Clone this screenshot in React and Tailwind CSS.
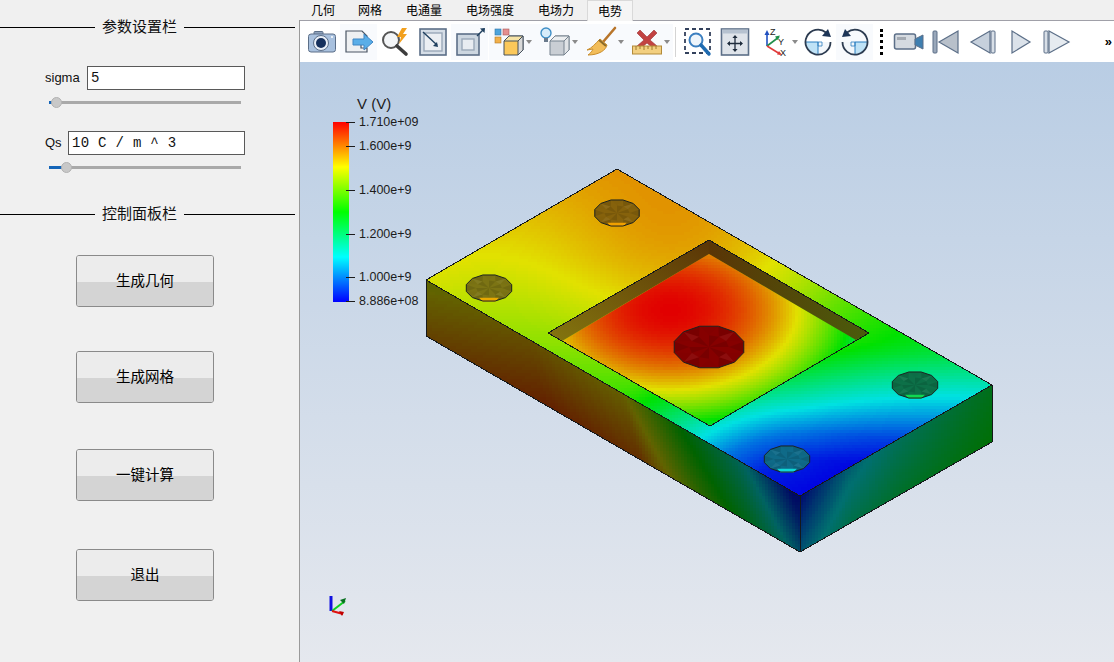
import React from "react";

const sans = "font-['Liberation_Sans','Noto_Sans_CJK_SC',sans-serif]";
const cjk = "font-['Noto_Sans_CJK_SC','Liberation_Sans',sans-serif]";

// ---------- potential field drawn on the part ----------
const clamp = (v, a = 0, b = 1) => Math.min(b, Math.max(a, v));

function rainbow(t) {
  const v = clamp(t) * 4;
  if (v < 1) return [0, v, 1];
  if (v < 2) return [0, 1, 2 - v];
  if (v < 3) return [v - 2, 1, 0];
  return [1, 4 - v, 0];
}

function lerpStops(stops, u) {
  for (let i = 1; i < stops.length; i++) {
    if (u <= stops[i][0]) {
      const [a, b] = [stops[i - 1], stops[i]];
      return a[1] + ((b[1] - a[1]) * (u - a[0])) / (b[0] - a[0]);
    }
  }
  return stops[stops.length - 1][1];
}

const topStops = [[0, 0], [30, 0.02], [57, 0.1], [90, 0.25], [140, 0.47], [150, 0.5], [400, 0.85]];

function topField(x, y) {
  const dx = (x - 800) / (x > 800 ? 3.5 : 1.6);
  const d = Math.hypot(dx, y - 490);
  const bump = 0.19 * Math.exp(-(((x - 690) / 110) ** 2) / 2 - ((y - 280) / 90) ** 2 / 2);
  return lerpStops(topStops, d) + bump - (x > 800 ? 0.0004 * (x - 800) : 0);
}

function floorField(x, y) {
  return 1 - ((x - 670) / 255) ** 2 - ((y - 310) / 160) ** 2;
}

const leftStops = [[0, 0.72], [0.3, 0.8], [0.55, 0.76], [0.7, 0.5], [0.85, 0.3], [1, 0.02]];
const rightStops = [[0, 0.02], [0.25, 0.2], [0.5, 0.3], [1, 0.44]];

function raster(x0, y0, x1, y1, shade, fn) {
  const buckets = new Map();
  const step = 3;
  for (let y = y0; y < y1; y += step) {
    for (let x = x0; x < x1; x += step) {
      const t = fn(x + 1.5, y + 1.5);
      if (t === null) continue;
      const [r, g, b] = rainbow(t).map((c) => Math.round((c * shade) / 3) * 3);
      const key = `rgb(${r},${g},${b})`;
      buckets.set(key, (buckets.get(key) || "") + `M${x} ${y}h3v3h-3z`);
    }
  }
  return [...buckets.entries()];
}

const topCells = raster(423, 166, 995, 499, 226, topField);
const floorCells = raster(558, 250, 860, 430, 226, floorField);
const leftCells = raster(423, 277, 803, 555, 98, (x, y) => {
  const u = (x - 426) / 374;
  const v = (y - (280 + u * 216)) / 56;
  if (v < -0.1 || v > 1.1) return null;
  return lerpStops(leftStops, clamp(u + (v - 0.5) * -0.05)) + 0.12 * v;
});
const rightCells = raster(797, 382, 995, 555, 112, (x, y) => {
  const u = (x - 800) / 192;
  const v = (y - (496 - u * 111)) / 56;
  if (v < -0.1 || v > 1.1) return null;
  return lerpStops(rightStops, clamp(u)) + 0.16 * clamp(v) * (1 - clamp(u) * 0.7);
});

function Cells({ cells, clip }) {
  return (
    <g clipPath={`url(#${clip})`} shapeRendering="crispEdges">
      {cells.map(([fill, d]) => (
        <path key={fill} d={d} fill={fill} />
      ))}
    </g>
  );
}

function Hole({ cx, cy, rx, ry, fill, rim, n = 12 }) {
  const ring = (k, off = 0) =>
    Array.from({ length: n }, (_, i) => {
      const a = ((i + off) / n) * Math.PI * 2;
      return [cx + Math.cos(a) * rx * k, cy + Math.sin(a) * ry * k];
    });
  const outer = ring(1, 0.5);
  const inner = ring(0.55, 1);
  const pts = (arr) => arr.map((p) => p.join(",")).join(" ");
  return (
    <g>
      <polygon points={pts(outer)} fill={fill} />
      {outer.map((p, i) => {
        const q = outer[(i + 1) % n];
        const m = inner[i];
        const m2 = inner[(i + 1) % n];
        return (
          <g key={i}>
            <polygon points={pts([p, q, m])} fill="#000" opacity={i % 2 ? 0.1 : 0.02} />
            {i % 2 === 0 && <polygon points={pts([m, m2, [cx, cy]])} fill="#000" opacity={0.1} />}
            {i % 3 === 0 && <polygon points={pts([m, m2, q])} fill="#fff" opacity={0.05} />}
          </g>
        );
      })}
      {rim && (
        <polygon
          points={`${cx - rx * 0.42},${cy + ry * 0.72} ${cx + rx * 0.42},${cy + ry * 0.72} ${cx + rx * 0.28},${cy + ry} ${cx - rx * 0.28},${cy + ry}`}
          fill={rim}
        />
      )}
      <polygon points={pts(outer)} fill="none" stroke="#1c2320" strokeWidth="1" />
    </g>
  );
}

function Model() {
  return (
    <svg width="814" height="600" viewBox="300 62 814 600" className="absolute left-0 top-0">
      <defs>
        <clipPath id="top-face"><polygon points="426,280 617,169 992,385 800,496" /></clipPath>
        <clipPath id="floor-face"><polygon points="562,341 709,254 856,340 710,426" /></clipPath>
        <clipPath id="left-face"><polygon points="426,280 800,496 800,552 426,336" /></clipPath>
        <clipPath id="right-face"><polygon points="800,496 992,385 992,442 800,552" /></clipPath>
        <linearGradient id="wall-a" x1="0" y1="1" x2="1" y2="0">
          <stop offset="0" stopColor="#84760f" />
          <stop offset="1" stopColor="#5a3506" />
        </linearGradient>
        <linearGradient id="wall-b" x1="0" y1="0" x2="1" y2="0">
          <stop offset="0" stopColor="#5a3506" />
          <stop offset="1" stopColor="#4a5c0c" />
        </linearGradient>
      </defs>
      <Cells cells={leftCells} clip="left-face" />
      <Cells cells={rightCells} clip="right-face" />
      <Cells cells={topCells} clip="top-face" />
      <Cells cells={floorCells} clip="floor-face" />
      <polygon points="548,333 709,240 709,254 562,341" fill="url(#wall-a)" />
      <polygon points="709,240 869,333 856,340 709,254" fill="url(#wall-b)" />
      <g fill="none" stroke="#15181a" strokeWidth="1" shapeRendering="crispEdges">
        <polygon points="426,280 617,169 992,385 992,442 800,552 426,336" />
        <polyline points="426,280 800,496 992,385" />
        <line x1="800" y1="496" x2="800" y2="552" />
        <polyline points="710,426 548,333 709,240 869,333 710,426" />
      </g>
      <Hole cx={617} cy={213} rx={23} ry={13.500} fill="#86620c" rim="#f0a000" />
      <Hole cx={489} cy={288} rx={23.500} ry={13.500} fill="#7c7414" rim="#e8a800" />
      <Hole cx={915} cy={385} rx={23.500} ry={13.500} fill="#0d7048" rim="#10d850" />
      <Hole cx={787} cy={459} rx={23.500} ry={13.500} fill="#0f6a88" rim="#10d8d8" />
      <Hole cx={709} cy={347} rx={36} ry={21.500} fill="#860000" />
      <g strokeWidth="2" fill="none">
        <line x1="331" y1="611" x2="331" y2="596" stroke="#1010e0" strokeWidth="3" />
        <line x1="332" y1="611" x2="345" y2="601" stroke="#10d020" />
        <line x1="332" y1="611" x2="343" y2="614" stroke="#e01010" />
      </g>
      <polygon points="340,600 346,598 344,604" fill="#087020" />
      <polygon points="339,611 344,612 342,616" fill="#c00000" />
    </svg>
  );
}

// ---------- colour legend ----------
const ticks = [
  ["1.710e+09", 122],
  ["1.600e+9", 146],
  ["1.400e+9", 190],
  ["1.200e+9", 234],
  ["1.000e+9", 277],
  ["8.886e+08", 301],
];

function Legend() {
  return (
    <div className={`absolute left-[33px] top-[33px] w-[110px] h-[220px] text-[#1c1c1c] ${sans}`}>
      <div className="absolute left-[24px] top-0 text-[15px] leading-[18px]">V (V)</div>
      <div className="absolute left-0 top-[27px] w-[16px] h-[180px] bg-[linear-gradient(to_bottom,#ff0000,#ffff00_25%,#00ff00_50%,#00ffff_75%,#0000ff)]" />
      {ticks.map(([label, y]) => (
        <div key={label} className="absolute left-[13px] flex items-center h-[14px]" style={{ top: y - 95 - 7 }}>
          <span className="w-[9px] h-[1px] bg-[#1c1c1c]" />
          <span className="ml-[4px] text-[12.5px] leading-[14px] whitespace-nowrap">{label}</span>
        </div>
      ))}
    </div>
  );
}

// ---------- toolbar icons ----------
const Icon = ({ children }) => (
  <svg width="32" height="32" viewBox="0 0 32 32" className="shrink-0">{children}</svg>
);

const line = "#5c6f88";

const CameraIcon = () => (
  <Icon>
    <rect x="8" y="5.5" width="9" height="4" rx="1" fill="#8fa3bd" stroke={line} />
    <rect x="2.5" y="8" width="27" height="18" rx="2.5" fill="#a9c1de" stroke={line} />
    <circle cx="15" cy="17" r="7.5" fill="#e8eef6" stroke={line} />
    <circle cx="15" cy="17" r="5" fill="#15305c" />
    <circle cx="26" cy="11" r="1" fill="#fff" />
  </Icon>
);
const ExportIcon = () => (
  <Icon>
    <path d="M3 5h16l5 5v7h-6v5h6v4H3z" fill="#eef0f2" stroke="#4a5564" strokeWidth="1.2" />
    <path d="M10 13h11V8l9 8-9 8v-5H10z" fill="#5aaee8" stroke="#3f86c4" />
  </Icon>
);
const SpotIcon = () => (
  <Icon>
    <circle cx="11" cy="14" r="8" fill="#f3f5f7" stroke="#555" strokeWidth="2" />
    <path d="M17 20l9 8" stroke="#3c3c3c" strokeWidth="3.6" strokeLinecap="round" />
    <path d="M22 2l-5 9h4l-2 7 8-10h-4l4-6z" fill="#f2a01e" />
  </Icon>
);
const BoxInIcon = () => (
  <Icon>
    <rect x="3" y="3" width="26" height="26" fill="#d6dee7" stroke={line} strokeWidth="1.6" />
    <rect x="7" y="7" width="18" height="18" fill="#eceff3" stroke="#9aa8b8" strokeWidth="1.4" />
    <path d="M6 6l14 13" stroke="#20405f" strokeWidth="1.4" />
    <path d="M16 20l5 1-1-5z" fill="#20405f" />
  </Icon>
);
const BoxOutIcon = () => (
  <Icon>
    <rect x="3" y="8" width="22" height="21" fill="#ccd6e0" stroke={line} strokeWidth="1.6" />
    <rect x="8" y="13" width="12" height="11" fill="#e8ecf1" stroke="#9aa8b8" strokeWidth="1.4" />
    <path d="M23 10l7-7" stroke="#20405f" strokeWidth="1.4" />
    <path d="M26 2.5l5-.5-.5 5z" fill="#20405f" />
  </Icon>
);
const PaletteIcon = () => (
  <Icon>
    <rect x="2" y="3" width="6" height="6" fill="#4ea4dc" stroke="#2f75a8" strokeWidth=".6" />
    <rect x="10" y="3" width="6" height="6" fill="#e58f8f" stroke="#a85a5a" strokeWidth=".6" />
    <rect x="2" y="11" width="6" height="6" fill="#f2b04a" stroke="#b07a26" strokeWidth=".6" />
    <path d="M11 15l5-5h14v14l-5 5H11z" fill="#fbc85a" stroke="#45505c" />
    <path d="M11 15l5-5h14l-5 5z" fill="#f6e3a6" stroke="#45505c" />
    <path d="M25 15l5-5v14l-5 5z" fill="#d9d9d9" stroke="#45505c" />
  </Icon>
);
const LightIcon = () => (
  <Icon>
    <circle cx="7" cy="7" r="5" fill="#d7ecfa" stroke="#3e8ec6" strokeWidth="1.4" />
    <rect x="5" y="12" width="4" height="4" fill="#6a7a8c" />
    <path d="M11 15l5-5h14v14l-5 5H11z" fill="#c9ced4" stroke="#77838f" />
    <path d="M11 15l5-5h14l-5 5z" fill="#eceef0" stroke="#77838f" />
    <path d="M25 15l5-5v14l-5 5z" fill="#e0e3e6" stroke="#77838f" />
  </Icon>
);
const BroomIcon = () => (
  <Icon>
    <path d="M30 2L18 16" stroke="#b8752a" strokeWidth="2.6" strokeLinecap="round" />
    <path d="M15 13l7 6c-1 5-8 10-19 10 4-3 5-6 5-6l-6 1c5-2 8-6 13-11z" fill="#f2bd5a" stroke="#c98e2e" />
    <path d="M14 14l7 6" stroke="#8a6a2a" strokeWidth="2" />
  </Icon>
);
const RulerIcon = () => (
  <Icon>
    <path d="M9 4l7 7 7-7 3 3-7 7 7 6-3 3-7-6-7 6-3-3 7-6-7-7z" fill="#c24242" stroke="#9a3030" strokeWidth=".6" />
    <rect x="1.5" y="20" width="29" height="8" fill="#f2cf80" stroke="#b28a3a" />
    <path d="M5 20v4M9 20v3M13 20v4M17 20v3M21 20v4M25 20v3" stroke="#a07a2c" />
  </Icon>
);
const ZoomBoxIcon = () => (
  <Icon>
    <rect x="3" y="3" width="25" height="24" fill="none" stroke="#33415c" strokeWidth="1.8" strokeDasharray="4 3" />
    <circle cx="14" cy="14" r="6.5" fill="#eef5fb" stroke="#3b7fc0" strokeWidth="2" />
    <path d="M19 19l8 9" stroke="#1f6bb0" strokeWidth="3.4" strokeLinecap="round" />
  </Icon>
);
const FitIcon = () => (
  <Icon>
    <rect x="2.5" y="3" width="27" height="26" fill="#dfe4ea" stroke={line} strokeWidth="1.6" />
    <rect x="3" y="3.5" width="26" height="4" fill="#b6c2d0" />
    <path d="M16 10v15M9 17.5h14" stroke="#1f2c3c" strokeWidth="1.3" />
    <path d="M16 9l-2.6 3h5.2zM16 26l-2.6-3h5.2zM8 17.5l3-2.6v5.2zM24 17.5l-3-2.6v5.2z" fill="#1f2c3c" />
  </Icon>
);
const AxesIcon = () => (
  <svg width="34" height="32" viewBox="0 0 34 32" className="shrink-0">
    <path d="M10 20V6" stroke="#2050c0" strokeWidth="1.6" />
    <path d="M10 4l-2.5 5h5z" fill="#2050c0" />
    <path d="M10 20l12-9" stroke="#1f8f4a" strokeWidth="1.6" />
    <path d="M23 9.5l-5 1 2.500 3.400z" fill="#1f8f4a" />
    <path d="M10 20l13 8" stroke="#e03a3a" strokeWidth="1.6" />
    <path d="M25 29l-5-.5 2-3.500z" fill="#e03a3a" />
    <text x="13" y="9" fontSize="9" fill="#222" fontFamily="Liberation Sans">Z</text>
    <text x="21" y="19" fontSize="9" fill="#222" fontFamily="Liberation Sans">Y</text>
    <text x="23" y="30" fontSize="9" fill="#222" fontFamily="Liberation Sans">X</text>
  </svg>
);
const RotateIcon = ({ flip }) => (
  <svg width="32" height="32" viewBox="0 0 32 32" className={flip ? "shrink-0 -scale-x-100" : "shrink-0"}>
    <path d="M16 16V28.500A12.500 12.500 0 0 1 3.500 16z" fill="#bfe2f6" />
    <path d="M16 16h12.500A12.500 12.500 0 0 1 16 28.500z" fill="#f3f7fb" />
    <path d="M3.500 16h12.500v12.500" fill="none" stroke="#2b7fc0" strokeWidth="1" />
    <path d="M24 6.500A12.500 12.500 0 1 0 28.500 16" fill="none" stroke="#2c3b50" strokeWidth="1.800" />
    <path d="M29 11l-9-1 6-7z" fill="#1d3557" />
    <path d="M16 16h4v4h-4z" fill="none" stroke="#2b7fc0" strokeWidth=".8" />
  </svg>
);
const VideoIcon = () => (
  <Icon>
    <rect x="1.500" y="8" width="21" height="15" rx="2" fill="#d5dae0" stroke={line} strokeWidth="1.500" />
    <rect x="4" y="11" width="9" height="3" fill="#a4aab2" />
    <path d="M22 13l8-4v14l-8-4z" fill="#3f7fb0" stroke={line} />
  </Icon>
);
const tri = "#c6d0dc";
const FirstIcon = () => (
  <Icon>
    <rect x="3" y="5" width="4" height="22" rx="1" fill="#9aa8ba" stroke={line} />
    <path d="M28 5v22L9 16z" fill="#b8c0ca" stroke={line} strokeWidth="1.200" />
  </Icon>
);
const PrevIcon = () => (
  <Icon>
    <path d="M23 5v22L4 16z" fill={tri} stroke={line} strokeWidth="1.200" />
    <rect x="24" y="5" width="4" height="22" rx="1" fill="#d8dfe7" stroke={line} />
  </Icon>
);
const PlayIcon = () => (
  <Icon>
    <path d="M8 5v22l18-11z" fill="#dbe2ea" stroke={line} strokeWidth="1.200" />
  </Icon>
);
const LastIcon = () => (
  <Icon>
    <rect x="3" y="5" width="4" height="22" rx="1" fill="#d8dfe7" stroke={line} />
    <path d="M8 5v22l20-11z" fill="#e6ebf0" stroke={line} strokeWidth="1.200" />
  </Icon>
);

const Caret = () => (
  <span className="ml-[1px] w-0 h-0 border-x-[3px] border-t-[4px] border-x-transparent border-t-[#8a8a8a]" />
);

function ToolBtn({ wide, hl, caret, children }) {
  return (
    <div className={`${wide ? "w-[46px]" : "w-[37px]"} h-[36px] flex items-center justify-center shrink-0 ${hl ? "bg-[#f8fafd]" : ""}`}>
      {children}
      {caret && <Caret />}
    </div>
  );
}

function Toolbar() {
  return (
    <div className="h-[41px] bg-white flex items-center pl-[3px] shrink-0">
      <ToolBtn><CameraIcon /></ToolBtn>
      <ToolBtn hl><ExportIcon /></ToolBtn>
      <ToolBtn><SpotIcon /></ToolBtn>
      <ToolBtn><BoxInIcon /></ToolBtn>
      <ToolBtn hl><BoxOutIcon /></ToolBtn>
      <div className="w-[1px]" />
      <ToolBtn wide caret hl><PaletteIcon /></ToolBtn>
      <ToolBtn wide caret hl><LightIcon /></ToolBtn>
      <ToolBtn wide caret hl><BroomIcon /></ToolBtn>
      <ToolBtn wide caret hl><RulerIcon /></ToolBtn>
      <div className="w-[1px] h-[30px] bg-[#d4d4d4] ml-[2px] mr-[3px]" />
      <ToolBtn><ZoomBoxIcon /></ToolBtn>
      <ToolBtn><FitIcon /></ToolBtn>
      <div className="w-[4px]" />
      <div className="w-[42px] h-[36px] flex items-center shrink-0">
        <AxesIcon />
        <Caret />
      </div>
      <ToolBtn><RotateIcon /></ToolBtn>
      <ToolBtn hl><RotateIcon flip /></ToolBtn>
      <div className="ml-[7px] mr-[7px] h-[26px] border-l-[3px] border-dotted border-black" />
      <ToolBtn><VideoIcon /></ToolBtn>
      <ToolBtn><FirstIcon /></ToolBtn>
      <ToolBtn><PrevIcon /></ToolBtn>
      <ToolBtn><PlayIcon /></ToolBtn>
      <ToolBtn><LastIcon /></ToolBtn>
      <span className={`ml-auto mr-[2px] text-[13px] font-bold text-black ${sans}`}>»</span>
    </div>
  );
}

const tabs = [
  ["几何", "w-[46px]"],
  ["网格", "w-[48px]"],
  ["电通量", "w-[60px]"],
  ["电场强度", "w-[72px]"],
  ["电场力", "w-[60px]"],
];

function TabBar() {
  return (
    <div className={`h-[21px] bg-[#f0f0f0] border-b border-[#a0a0a8] flex text-[12px] text-black shrink-0 ${cjk}`}>
      {tabs.map(([label, w]) => (
        <div key={label} className={`${w} h-[20px] flex items-center justify-center`}>{label}</div>
      ))}
      <div className="ml-[1px] w-[46px] h-[21px] flex items-center justify-center bg-[#f5f5f5] border-x border-t border-[#d9d9d9]">电势</div>
    </div>
  );
}

// ---------- left panel ----------
function SectionTitle({ children, className }) {
  return (
    <div className={`flex items-center w-[295px] h-[18px] ${className}`}>
      <div className="w-[95px] h-[1px] bg-black" />
      <div className={`w-[89px] text-center text-[15px] leading-[18px] -mt-[2px] text-[#111] ${cjk}`}>{children}</div>
      <div className="flex-1 h-[1px] bg-black" />
    </div>
  );
}

function Field({ label, labelW, inputW, value }) {
  return (
    <div className="flex items-center pl-[45px] h-[24px]">
      <div className={`${labelW} text-[13px] text-[#111] ${sans}`}>{label}</div>
      <div className={`${inputW} h-[24px] bg-white border border-[#595959] flex items-center pl-[3px] text-[14px] tracking-[0.3px] text-[#111] font-['Liberation_Mono',monospace] whitespace-pre`}>
        {value}
      </div>
    </div>
  );
}

function Slider({ pos, className }) {
  return (
    <div className={`relative ml-[49px] w-[192px] h-[3px] bg-[#a9a9a9] ${className}`}>
      <div className="h-[3px] bg-[#1565b8]" style={{ width: pos }} />
      <div className="absolute top-[-4px] w-[11px] h-[11px] rounded-full bg-[#c8c8c8] border border-[#b2b2b2]" style={{ left: pos - 5 }} />
    </div>
  );
}

function ActionButton({ label, className }) {
  return (
    <div className={`relative ml-[76px] w-[138px] h-[52px] rounded-[3px] border border-[#8a8a8a] overflow-hidden flex flex-col ${className}`}>
      <div className="h-[26px] bg-[#ececec]" />
      <div className="flex-1 bg-[#d4d4d4]" />
      <div className={`absolute inset-0 flex items-center justify-center pb-[2px] text-[14.5px] text-black ${cjk}`}>{label}</div>
    </div>
  );
}

function SidePanel() {
  return (
    <div className="w-[300px] h-full bg-[#f0f0f0] shrink-0 relative pt-[18px]">
      <div className="absolute right-0 top-[20px] bottom-0 w-[1px] bg-[#9a9a9a]" />
      <SectionTitle>参数设置栏</SectionTitle>
      <div className="mt-[30px]">
        <Field label="sigma" labelW="w-[42px]" inputW="w-[158px]" value="5" />
      </div>
      <Slider pos={7} className="mt-[11px]" />
      <div className="mt-[27px]">
        <Field label="Qs" labelW="w-[23px]" inputW="w-[177px]" value="10 C / m ^ 3" />
      </div>
      <Slider pos={17} className="mt-[11px]" />
      <SectionTitle className="mt-[36px]">控制面板栏</SectionTitle>
      <ActionButton label="生成几何" className="mt-[32px]" />
      <ActionButton label="生成网格" className="mt-[44px]" />
      <ActionButton label="一键计算" className="mt-[46px]" />
      <ActionButton label="退出" className="mt-[48px]" />
    </div>
  );
}

export default function App() {
  return (
    <div className="w-[1114px] h-[662px] flex overflow-hidden bg-[#f0f0f0]">
      <SidePanel />
      <div className="flex-1 flex flex-col min-w-0">
        <TabBar />
        <Toolbar />
        <div className="relative flex-1 bg-[linear-gradient(to_bottom,#b9cde4,#e5e8ee)] overflow-hidden">
          <Model />
          <Legend />
        </div>
      </div>
    </div>
  );
}
